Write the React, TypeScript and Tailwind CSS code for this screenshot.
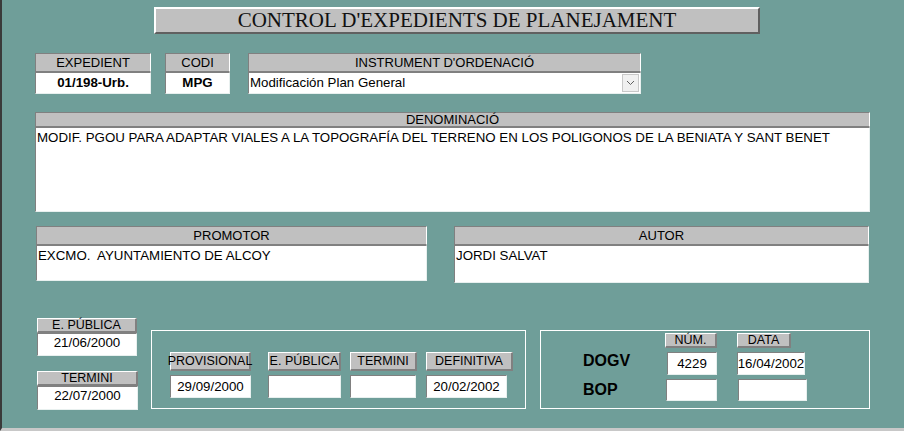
const sunkenLabel =
  'bg-[#c0c0c0] border-t border-l border-t-[#808080] border-l-[#808080] border-r border-r-white text-center text-[13px] leading-none flex items-center justify-center text-black';
const raisedLabel =
  'bg-[#c0c0c0] border-t border-l border-t-white border-l-white border-b-2 border-r-2 border-b-[#808080] border-r-[#808080] text-center text-[12.5px] leading-none flex items-center justify-center text-black';
const box =
  'bg-white border-t border-l border-t-[#808080] border-l-[#808080] border-b border-r border-b-[#e8f0ef] border-r-[#e8f0ef] text-[13.3px] leading-none text-black';

function Field({ label, value, w, bold }: { label: string; value: string; w: string; bold?: boolean }) {
  return (
    <div className={`flex flex-col ${w}`}>
      <div className={`${sunkenLabel} h-[19px] border-b border-b-[#808080]`}>{label}</div>
      <div className={`${box} h-[22px] flex items-center justify-center ${bold ? 'font-bold' : ''}`}>{value}</div>
    </div>
  );
}

function DateField({ label, value, lw, vw }: { label: string; value: string; lw: string; vw: string }) {
  return (
    <div className="flex flex-col">
      <div className={`${raisedLabel} h-[19px] ${lw}`}>{label}</div>
      <div className={`${box} mt-[4px] h-[23px] ${vw} flex items-center justify-center`}>{value}</div>
    </div>
  );
}

export default function App() {
  return (
    <div
      className="w-[904px] h-[431px] bg-[#6f9e99] border-l-2 border-l-[#3a3a3a] border-b-[3px] border-b-[#c8c8c8] overflow-hidden"
      style={{ fontFamily: '"Liberation Sans", Arial, sans-serif' }}
    >
      {/* title */}
      <div className="pt-[7px] pl-[152px]">
        <div
          className="w-[606px] h-[27px] bg-[#c0c0c0] border-t-2 border-l-2 border-t-white border-l-white border-b-2 border-r-2 border-b-[#606060] border-r-[#606060] flex items-center justify-center text-[21px] text-[#111]"
          style={{ fontFamily: '"Liberation Serif", "Times New Roman", serif' }}
        >
          CONTROL D'EXPEDIENTS DE PLANEJAMENT
        </div>
      </div>

      {/* expedient / codi / instrument */}
      <div className="mt-[19px] pl-[33px] flex">
        <Field label="EXPEDIENT" value="01/198-Urb." w="w-[116px]" bold />
        <div className="ml-[14px]">
          <Field label="CODI" value="MPG" w="w-[65px]" bold />
        </div>
        <div className="ml-[18px] flex flex-col w-[393px]">
          <div className={`${sunkenLabel} h-[19px] border-b border-b-[#808080]`}>INSTRUMENT D'ORDENACIÓ</div>
          <div className={`${box} h-[22px] flex items-center pl-[1px] pr-[1px]`}>
            <span className="flex-1">Modificación Plan General</span>
            <div className="w-[17px] h-[18px] bg-[#f0f0f0] border border-[#c8c8c8] flex items-center justify-center">
              <svg width="9" height="6" viewBox="0 0 9 6">
                <path d="M1 1 L4.5 4.5 L8 1" fill="none" stroke="#606060" strokeWidth="1" />
              </svg>
            </div>
          </div>
        </div>
      </div>

      {/* denominacio */}
      <div className="mt-[18px] pl-[33px]">
        <div className="w-[835px] flex flex-col">
          <div className={`${sunkenLabel} h-[15px] border-b border-b-[#808080]`}>DENOMINACIÓ</div>
          <div className={`${box} h-[85px] pl-[1px] pt-[3px]`}>
            MODIF. PGOU PARA ADAPTAR VIALES A LA TOPOGRAFÍA DEL TERRENO EN LOS POLIGONOS DE LA BENIATA Y SANT BENET
          </div>
        </div>
      </div>

      {/* promotor / autor */}
      <div className="mt-[14px] pl-[34px] flex">
        <div className="w-[391px] flex flex-col">
          <div className={`${sunkenLabel} h-[19px] border-b border-b-[#808080]`}>PROMOTOR</div>
          <div className={`${box} h-[36px] pl-[1px] pt-[3px]`}>EXCMO.&nbsp; AYUNTAMIENTO DE ALCOY</div>
        </div>
        <div className="ml-[27px] w-[415px] flex flex-col">
          <div className={`${sunkenLabel} h-[19px] border-b border-b-[#808080]`}>AUTOR</div>
          <div className={`${box} h-[38px] pl-[1px] pt-[3px]`}>JORDI SALVAT</div>
        </div>
      </div>

      {/* bottom */}
      <div className="mt-[35px] pl-[35px] flex items-start">
        <div className="flex flex-col w-[100px]">
          <div className={`${raisedLabel} h-[15px]`}>E. PÚBLICA</div>
          <div className={`${box} h-[23px] flex items-start justify-center pt-[2px]`}>21/06/2000</div>
          <div className={`${raisedLabel} mt-[15px] h-[15px] w-[101px]`}>TERMINI</div>
          <div className={`${box} h-[24px] w-[101px] flex items-start justify-center pt-[2px]`}>22/07/2000</div>
        </div>

        <div className="ml-[14px] mt-[12px] w-[375px] h-[79px] border border-white flex items-start gap-[17px] pl-[18px] pt-[21px]">
          <DateField label="PROVISIONAL" value="29/09/2000" lw="w-[81px]" vw="w-[81px]" />
          <DateField label="E. PÚBLICA" value="" lw="w-[73px]" vw="w-[73px]" />
          <div className="-ml-[8px]">
            <DateField label="TERMINI" value="" lw="w-[67px]" vw="w-[66px]" />
          </div>
          <div className="-ml-[8px]">
            <DateField label="DEFINITIVA" value="20/02/2002" lw="w-[87px]" vw="w-[81px]" />
          </div>
        </div>

        <div className="ml-[14px] mt-[12px] w-[330px] h-[79px] border border-white flex pl-[42px] pt-[2px]">
          <div className="flex flex-col font-bold text-[16px] text-black w-[82px] pt-[20px] leading-none">
            <div className="h-[20px]">DOGV</div>
            <div className="mt-[9px]">BOP</div>
          </div>
          <div className="flex flex-col w-[52px]">
            <div className={`${raisedLabel} h-[15px]`}>NÚM.</div>
            <div className={`${box} mt-[4px] h-[23px] w-[50px] ml-[2px] flex items-center justify-center`}>4229</div>
            <div className={`${box} mt-[4px] h-[22px] w-[51px] ml-[1px]`}></div>
          </div>
          <div className="ml-[20px] flex flex-col w-[70px]">
            <div className={`${raisedLabel} h-[15px] w-[54px]`}>DATA</div>
            <div className={`${box} mt-[4px] h-[23px] w-[68px] flex items-center justify-center`}>16/04/2002</div>
            <div className={`${box} mt-[4px] h-[22px] w-[69px] ml-[1px]`}></div>
          </div>
        </div>
      </div>
    </div>
  );
}
